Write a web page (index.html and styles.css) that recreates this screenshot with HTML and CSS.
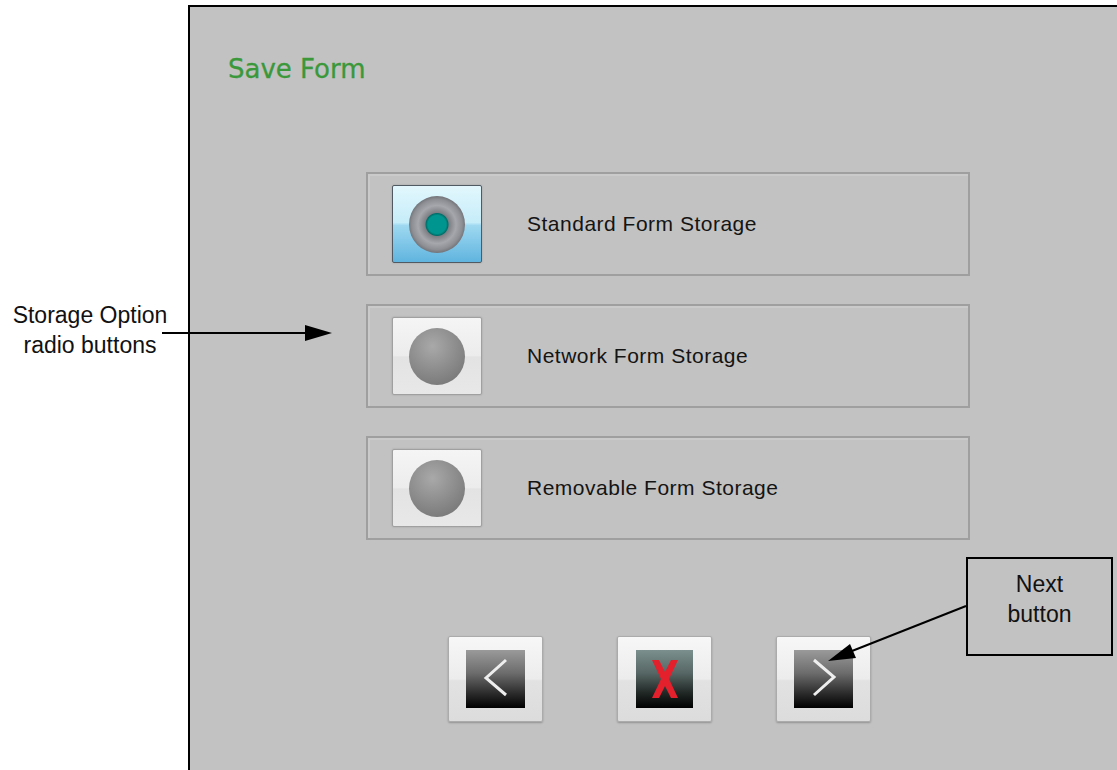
FILE: index.html
```html
<!DOCTYPE html>
<html lang="en">
<head>
    <meta charset="UTF-8">
    <title>Save Form</title>
    <link rel="stylesheet" href="styles.css">
</head>
<body>
    <div class="page">
        <aside class="side">
            <div class="note">Storage Option<br>radio buttons</div>
        </aside>
        <section class="panel">
            <div class="title">Save Form</div>
            <div class="options">
                <div class="option">
                    <div class="radio selected"><span class="ball"></span></div>
                    <span class="label">Standard Form Storage</span>
                </div>
                <div class="option">
                    <div class="radio"><span class="ball"></span></div>
                    <span class="label">Network Form Storage</span>
                </div>
                <div class="option">
                    <div class="radio"><span class="ball"></span></div>
                    <span class="label">Removable Form Storage</span>
                </div>
            </div>
            <div class="nav">
                <div class="btn">
                    <div class="face">
                        <svg width="59" height="58" viewBox="0 0 59 58"><polyline points="40,10 20,28 40,45" fill="none" stroke="#eee" stroke-width="3"/></svg>
                    </div>
                </div>
                <div class="btn cancel">
                    <div class="face red">
                        <svg width="57" height="58" viewBox="0 0 57 58"><path d="M16 10 L23 10 L29 22 L35 10 L42 10 L33 29 L42 48 L35 48 L29 36 L23 48 L16 48 L25 29 Z" fill="#e3202c"/></svg>
                    </div>
                </div>
                <div class="btn">
                    <div class="face">
                        <svg width="58" height="58" viewBox="0 0 58 58"><polyline points="20,10 40,27 20,45" fill="none" stroke="#eee" stroke-width="3"/></svg>
                    </div>
                </div>
            </div>
        </section>
        <div class="callout">Next<br>button</div>
        <svg class="arrows" width="1117" height="770" viewBox="0 0 1117 770">
            <line x1="162" y1="333" x2="308" y2="333" stroke="#000" stroke-width="2"/>
            <polygon points="305,325 332,333 305,341" fill="#000"/>
            <line x1="966" y1="606" x2="852" y2="651" stroke="#000" stroke-width="2"/>
            <polygon points="828,661 856,658 850,644" fill="#000"/>
        </svg>
    </div>
</body>
</html>
```

FILE: styles.css
```css
*{
    margin:0;padding:0;box-sizing:border-box;
}
body{
    background-color: #fff;
    font-family: "Liberation Sans", Arial, sans-serif;
    overflow: hidden;
}
.page{
    position: relative;
    display: flex;
    width: 1117px;
    height: 770px;
}
.side{
    width: 188px;
    flex: none;
}
.note{
    width: 180px;
    margin-top: 300px;
    text-align: center;
    font-size: 23px;
    line-height: 30px;
    color: #111;
}
.panel{
    flex: 1;
    margin-top: 5px;
    height: 765px;
    border-top: 2px solid #000;
    border-left: 2px solid #000;
    background-color: #c2c2c2;
    padding-top: 47px;
}
.title{
    padding-left: 38px;
    font-family: "DejaVu Sans", Verdana, sans-serif;
    font-size: 26px;
    line-height: 30px;
    color: #3a983a;
    -webkit-text-stroke: 0.3px #3a983a;
}
.options{
    margin: 88px 0 0 176px;
    width: 604px;
    display: flex;
    flex-direction: column;
    gap: 28px;
}
.option{
    height: 104px;
    display: flex;
    align-items: center;
    padding-left: 24px;
    border: 2px solid #9f9f9f;
    box-shadow: inset 2px 2px 0 #cacaca;
}
.radio{
    width: 90px;
    height: 78px;
    flex: none;
    display: flex;
    align-items: center;
    justify-content: center;
    border: 1px solid #a0a0a0;
    border-radius: 2px;
    background: linear-gradient(#f5f5f5, #ececec 50%, #e3e3e3 51%, #e8e8e8);
    box-shadow: 0 0 2px rgba(0,0,0,0.2);
}
.radio.selected{
    border-color: #505a62;
    background: linear-gradient(#e2f7fd, #c6edf9 48%, #9ed8f0 52%, #60b4df);
}
.ball{
    width: 56px;
    height: 57px;
    border-radius: 50%;
    background: radial-gradient(circle at 42% 32%, #a9a9a9, #8b8b8b 50%, #6e6e6e 100%);
}
.selected .ball{
    background: radial-gradient(circle, #00968f 0 9px, #006f6a 11px, #7d7f85 12px, #a6a7ad 19px, #8e8f95 25px, #76777c 28px);
}
.label{
    margin-left: 45px;
    font-size: 21px;
    letter-spacing: 0.5px;
    color: #141414;
}
.nav{
    display: flex;
    margin-top: 96px;
    padding-left: 258px;
}
.btn{
    width: 95px;
    height: 86px;
    display: flex;
    align-items: center;
    justify-content: center;
    border: 1px solid #ababab;
    border-radius: 2px;
    background: linear-gradient(#f7f7f7, #ececec 50%, #e2e2e2 52%, #dcdcdc);
    box-shadow: 0 1px 2px rgba(0,0,0,0.25);
}
.btn.cancel{
    margin: 0 64px 0 74px;
}
.face{
    width: 59px;
    height: 58px;
    background: linear-gradient(#9a9a9a, #6c6c6c 40%, #2b2b2b 75%, #000);
}
.face.red{
    width: 57px;
    background: linear-gradient(#7b908e, #566664 40%, #1f2624 75%, #000);
}
.face svg{
    display: block;
}
.callout{
    position: absolute;
    left: 966px;
    top: 557px;
    width: 147px;
    height: 99px;
    padding-top: 10px;
    border: 2px solid #000;
    background-color: #c2c2c2;
    text-align: center;
    font-size: 23px;
    line-height: 30px;
    color: #111;
}
.arrows{
    position: absolute;
    left: 0;
    top: 0;
    pointer-events: none;
}
```
